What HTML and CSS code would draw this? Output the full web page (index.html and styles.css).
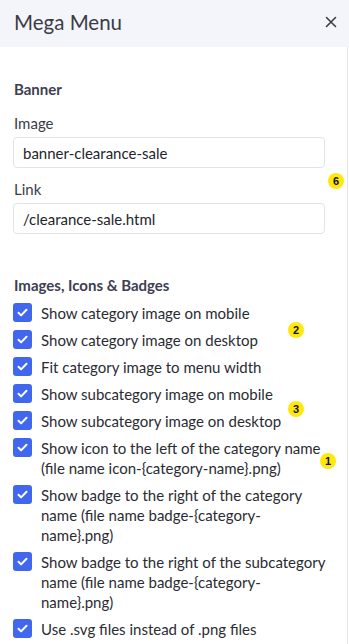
FILE: index.html
```html
<!DOCTYPE html>
<html lang="en">
  <head>
    <meta charset="UTF-8" />
    <meta name="viewport" content="width=device-width, initial-scale=1.0" />
    <title>Mega Menu</title>
    <link rel="stylesheet" href="styles.css">
  </head>
  <body>
    <div class="panel">
      <header class="panel-head">
        <h1>Mega Menu</h1>
        <span class="close">
          <svg width="12" height="12" viewBox="0 0 12 12"><path d="M1.5 1.5l9 9M10.5 1.5l-9 9" stroke="#3a3d45" stroke-width="1.6" stroke-linecap="round"/></svg>
        </span>
      </header>

      <div class="panel-body">
        <!-- Banner -->
        <section class="group">
          <h2>Banner</h2>
          <label class="field-label">Image</label>
          <input class="field" type="text" value="banner-clearance-sale">
          <label class="field-label">Link</label>
          <input class="field" type="text" value="/clearance-sale.html">
        </section>

        <!-- Images, Icons & Badges -->
        <section class="group group-checks">
          <h2>Images, Icons &amp; Badges</h2>
          <div class="checks">
            <label class="check"><span class="box"></span><span>Show category image on mobile</span></label>
            <label class="check"><span class="box"></span><span>Show category image on desktop</span></label>
            <label class="check"><span class="box"></span><span>Fit category image to menu width</span></label>
            <label class="check"><span class="box"></span><span>Show subcategory image on mobile</span></label>
            <label class="check"><span class="box"></span><span>Show subcategory image on desktop</span></label>
            <label class="check"><span class="box"></span><span>Show icon to the left of the category name (file name icon-{category-name}.png)</span></label>
            <label class="check"><span class="box"></span><span>Show badge to the right of the category name (file name badge-{category-name}.png)</span></label>
            <label class="check"><span class="box"></span><span>Show badge to the right of the subcategory name (file name badge-{category-name}.png)</span></label>
            <label class="check"><span class="box"></span><span>Use .svg files instead of .png files</span></label>
          </div>
        </section>

        <span class="marker m6">6</span>
        <span class="marker m2">2</span>
        <span class="marker m3">3</span>
        <span class="marker m1">1</span>
      </div>
    </div>
  </body>
</html>
```

FILE: styles.css
```css
body {
  margin: 0;
  padding: 0;
  background-color: #fff;
  font-family: Lato, "Open Sans", sans-serif;
  color: #2a2c33;
}

.panel {
  width: 349px;
  height: 644px;
  overflow: hidden;
}

.panel-head {
  box-sizing: border-box;
  height: 47px;
  padding: 0 9px 4px 14px;
  display: flex;
  align-items: center;
  justify-content: space-between;
  background-color: #f4f5fa;
}

.panel-head h1 {
  margin: 0;
  font-size: 20.5px;
  font-weight: 400;
  color: #3a3d45;
}

.close {
  display: flex;
  width: 12px;
  height: 12px;
  margin: 0 3px 0 0;
}

.panel-body {
  position: relative;
  width: 347px;
  height: 597px;
  padding: 32px 0 0;
  border-right: 1px solid #e6e7eb;
}

.group {
  padding: 0 23px 0 13px;
}

.group h2 {
  margin: 0 0 14px 1px;
  font-size: 15px;
  font-weight: 700;
  line-height: 20px;
  color: #3d4050;
}

.field-label {
  display: block;
  margin: 0 0 4px 1px;
  font-size: 15px;
  line-height: 20px;
  color: #3a3d45;
}

.field {
  display: block;
  box-sizing: border-box;
  width: 312px;
  height: 31px;
  margin: 0 0 11px;
  padding: 0 9px;
  border: 1px solid #e1e3ea;
  border-radius: 4px;
  font-family: inherit;
  font-size: 15px;
  color: #23252c;
}

.group-checks {
  margin-top: 41px;
  padding-right: 19px;
}

.group-checks h2 {
  margin-bottom: 8px;
}

.checks {
  display: flex;
  flex-direction: column;
  gap: 7px;
}

.check {
  display: flex;
  align-items: flex-start;
  gap: 9px;
  font-size: 15px;
  line-height: 20px;
  color: #2a2c33;
}

.box {
  flex: none;
  width: 19px;
  height: 19px;
  border-radius: 3px;
  background: #4167ee url("data:image/svg+xml,%3Csvg xmlns='http://www.w3.org/2000/svg' viewBox='0 0 19 19'%3E%3Cpath d='M5.5 9.8l2.6 2.6 5.4-5.6' fill='none' stroke='%23fff' stroke-width='2' stroke-linecap='round' stroke-linejoin='round'/%3E%3C/svg%3E") center / 19px 19px no-repeat;
}

.marker {
  position: absolute;
  width: 16px;
  height: 16px;
  border-radius: 50%;
  background-color: #ffe80a;
  font-family: "Liberation Sans", Arial, sans-serif;
  font-size: 11px;
  font-weight: 700;
  line-height: 16px;
  text-align: center;
  color: #111;
}

.m6 { left: 328px; top: 126px; }
.m2 { left: 288px; top: 275px; }
.m3 { left: 288px; top: 354px; }
.m1 { left: 320px; top: 406px; }
```
